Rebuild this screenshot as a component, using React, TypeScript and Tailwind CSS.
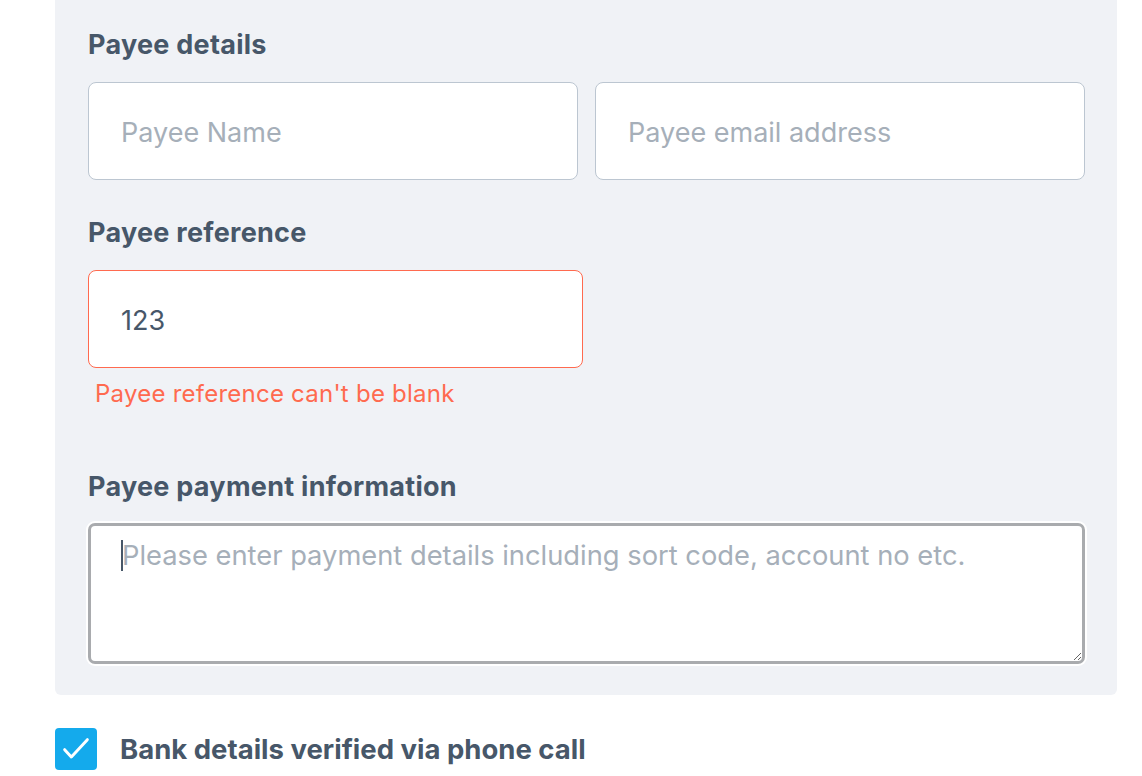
import React from 'react'

const labelCls = "block text-[27px] leading-[30px] font-bold tracking-[0.01em] text-[#475769]"
const inputCls =
  "h-[98px] rounded-[8px] border border-[#bcc6d1] bg-white px-[32px] pt-[2px] text-[27px] text-[#475769] placeholder:text-[#a6afb9] outline-none"

export default function App() {
  return (
    <div className="min-h-screen bg-white pl-[55px] pr-[25px]" style={{ fontFamily: 'Inter, "Noto Sans", sans-serif' }}>
      {/* Payee panel */}
      <div className="rounded-b-[6px] bg-[#f0f2f6] pl-[33px] pr-[32px] pt-[30px] pb-[31px]">
        <label className={labelCls}>Payee details</label>
        <div className="mt-[22px] grid grid-cols-2 gap-[17px]">
          <input className={inputCls} placeholder="Payee Name" />
          <input className={inputCls} placeholder="Payee email address" />
        </div>

        <label className={`${labelCls} mt-[38px]`}>Payee reference</label>
        <input
          className={`${inputCls} mt-[22px] w-[495px] h-[97px] border-[#ff6a4f]`}
          defaultValue="123"
        />
        <p className="mt-[12px] pl-[7px] text-[24px] leading-[28px] tracking-[0.01em] text-[#ff6a4f]">
          Payee reference can't be blank
        </p>

        <label className={`${labelCls} mt-[64px]`}>Payee payment information</label>
        <div className="relative mt-[21px]">
          <textarea
            className="block h-[141px] w-full rounded-[7px] border-[3px] border-[#a9abae] bg-white px-[31px] pt-[12px] text-[27.3px] leading-[36px] text-[#475769] placeholder:text-[#a6afb9] outline-none shadow-[0_0_0_2px_#ffffff]"
            placeholder="Please enter payment details including sort code, account no etc."
          />
          <span className="absolute left-[33px] top-[17px] h-[31px] w-[2px] bg-[#475769]" />
        </div>
      </div>

      {/* Verified checkbox */}
      <div className="mt-[33px] flex items-center gap-[23px]">
        <span className="flex h-[42px] w-[42px] items-center justify-center rounded-[4px] bg-[#14aaec]">
          <svg width="32" height="32" viewBox="0 0 24 24" fill="none" stroke="white" strokeWidth="2.2" strokeLinecap="round" strokeLinejoin="round">
            <path d="M3.5 12.5l5 5.5L20.5 5" />
          </svg>
        </span>
        <span className="text-[27.5px] leading-[30px] font-bold text-[#475769]">
          Bank details verified via phone call
        </span>
      </div>
    </div>
  )
}
